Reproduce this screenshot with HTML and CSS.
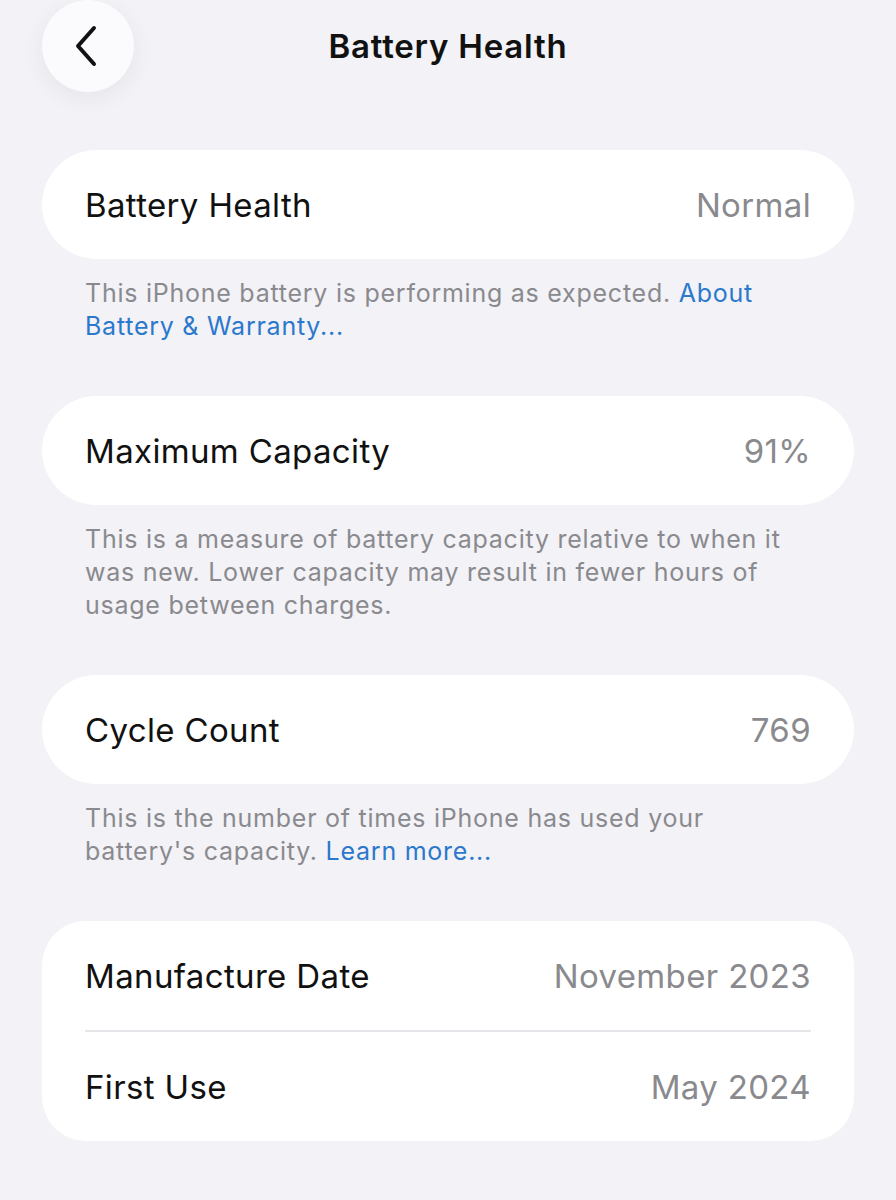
FILE: index.html
```html
<!DOCTYPE html>
<html>
<head>
<meta charset="utf-8">
<link rel="stylesheet" href="styles.css">
</head>
<body>
<div class="page">
  <header class="nav">
    <div class="back">
      <svg width="30" height="42" viewBox="0 0 30 42"><path d="M24 3 L8 21 L24 39" fill="none" stroke="#111" stroke-width="4" stroke-linecap="round" stroke-linejoin="round"/></svg>
    </div>
    <h1 class="title">Battery Health</h1>
  </header>

  <section class="card">
    <div class="row"><span class="label">Battery Health</span><span class="value">Normal</span></div>
  </section>
  <p class="note">This iPhone battery is performing as expected. <span class="link">About Battery &amp; Warranty...</span></p>

  <section class="card">
    <div class="row"><span class="label">Maximum Capacity</span><span class="value">91%</span></div>
  </section>
  <p class="note">This is a measure of battery capacity relative to when it was new. Lower capacity may result in fewer hours of usage between charges.</p>

  <section class="card">
    <div class="row"><span class="label">Cycle Count</span><span class="value">769</span></div>
  </section>
  <p class="note">This is the number of times iPhone has used your battery's capacity. <span class="link">Learn more...</span></p>

  <section class="card group">
    <div class="row"><span class="label">Manufacture Date</span><span class="value">November 2023</span></div>
    <div class="divider"></div>
    <div class="row"><span class="label">First Use</span><span class="value">May 2024</span></div>
  </section>
</div>
</body>
</html>
```

FILE: styles.css
```css
html, body {
  margin: 0;
  padding: 0;
  background: #f2f2f7;
}
body {
  font-family: Inter, "Noto Sans", "Liberation Sans", sans-serif;
  color: #111;
}
.page {
  width: 896px;
  height: 1200px;
  padding: 0 42px;
  box-sizing: border-box;
  overflow: hidden;
}
.nav {
  position: relative;
  height: 92px;
  display: flex;
  align-items: center;
  justify-content: center;
  margin-bottom: 58px;
}
.back {
  position: absolute;
  left: 0;
  top: 0;
  width: 92px;
  height: 92px;
  border-radius: 50%;
  background: #fbfbfd;
  box-shadow: 0 6px 24px rgba(0,0,0,0.06);
  display: flex;
  align-items: center;
  justify-content: center;
}
.back svg { margin-left: -6px; }
.title {
  margin: 0;
  font-size: 33px;
  font-weight: 600;
  letter-spacing: 0.8px;
  color: #111;
}
.card {
  background: #fff;
  border-radius: 55px;
  padding: 0 43px;
}
.card.group {
  border-radius: 44px;
}
.row {
  height: 109px;
  display: flex;
  align-items: center;
  justify-content: space-between;
}
.label {
  font-size: 33px;
  color: #111;
  letter-spacing: 0.35px;
}
.value {
  font-size: 33px;
  color: #8a8a8e;
  letter-spacing: 0.35px;
}
.divider {
  height: 2px;
  background: #e5e5ea;
}
.note {
  margin: 0 0 53px 0;
  padding: 18px 43px 0 43px;
  font-size: 25px;
  line-height: 33px;
  color: #8a8a8e;
  letter-spacing: 0.75px;
}
.link {
  color: #2b78cc;
}
```
